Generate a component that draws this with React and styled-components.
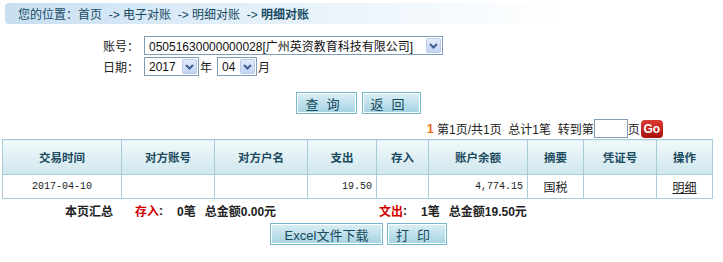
import styled, { createGlobalStyle } from "styled-components";

const GlobalStyle = createGlobalStyle`
  html, body {
    margin: 0;
    padding: 0;
    background: #fff;
    font-family: "Liberation Sans", "Noto Sans CJK SC", sans-serif;
    font-size: 12px;
    color: #333;
  }
`;

const Page = styled.div`
  width: 723px;
  height: 262px;
  overflow: hidden;
  padding-top: 3px;
  box-sizing: border-box;
`;

const Crumbs = styled.div`
  margin-left: 5px;
  width: 560px;
  height: 21px;
  border-radius: 4px 0 0 4px;
  background: linear-gradient(to right, #c8dff2 0%, #e4f0f9 45%, #ffffff 100%);
  display: flex;
  align-items: center;
  padding-left: 13px;
  box-sizing: border-box;
  color: #164a63;
  font-size: 12px;
  white-space: pre;
  b {
    font-weight: bold;
  }
`;

const Form = styled.div`
  margin-top: 12px;
  padding-left: 103px;
  display: grid;
  grid-template-columns: 41px auto;
  row-gap: 2px;
  align-items: center;
`;

const Label = styled.span`
  font-size: 12px;
  color: #222;
`;

const Fields = styled.div`
  display: flex;
  align-items: center;
  font-size: 12px;
  color: #222;
`;

const SelectBox = styled.div`
  width: ${(p) => p.$w}px;
  height: 19px;
  border: 1px solid #7f9db9;
  box-sizing: border-box;
  display: flex;
  align-items: center;
  justify-content: space-between;
  padding: 0 1px 0 4px;
  font-size: 12px;
  color: #111;
  background: #fff;
`;

const Unit = styled.span`
  margin: 0 ${(p) => p.$mr || 0}px 0 1px;
`;

const Arrow = styled.span`
  width: 15px;
  height: 15px;
  box-sizing: border-box;
  border: 1px solid #b9cbe8;
  border-radius: 2px;
  background: linear-gradient(#e3ecfa, #c3d4f2);
  display: flex;
  align-items: center;
  justify-content: center;
`;

const ButtonRow = styled.div`
  display: flex;
  gap: ${(p) => p.$gap}px;
  padding-left: ${(p) => p.$pl}px;
  margin-top: ${(p) => p.$mt}px;
`;

const Btn = styled.button`
  width: ${(p) => p.$w}px;
  height: 22px;
  padding: 0;
  border: 1px solid #76b6cd;
  box-shadow: inset 0 0 0 1px #fff;
  background: linear-gradient(#dbeff5, #a5d2e2);
  color: #164a5c;
  font-family: "Liberation Sans", "Noto Sans CJK SC", sans-serif;
  font-size: 13px;
  letter-spacing: ${(p) => p.$ls || 0}px;
  display: flex;
  align-items: center;
  justify-content: center;
`;

const Pager = styled.div`
  margin-top: 4px;
  padding-left: 427px;
  height: 21px;
  display: flex;
  align-items: center;
  font-size: 12px;
  color: #222;
  white-space: pre;
  .cur {
    color: #f26a10;
    font-weight: bold;
  }
`;

const PageInput = styled.span`
  width: 34px;
  height: 19px;
  border: 1px solid #7f9db9;
  box-sizing: border-box;
  display: inline-block;
`;

const GoBtn = styled.span`
  width: 22px;
  height: 18px;
  margin-left: 1px;
  border-radius: 4px;
  background: linear-gradient(#dc3b33, #a8110c);
  color: #fff;
  font-weight: bold;
  font-size: 12px;
  display: flex;
  align-items: center;
  justify-content: center;
`;

const Table = styled.table`
  margin-left: 2px;
  width: 710px;
  border-collapse: collapse;
  table-layout: fixed;
  th, td {
    border: 1px solid #a9cbd8;
    padding: 0;
  }
  th {
    height: 34px;
    background: linear-gradient(#f1f9fb, #cfe6ee);
    color: #1b4a5e;
    font-size: 11.5px;
    font-weight: bold;
    text-align: center;
  }
  td {
    height: 23px;
    font-size: 12px;
    color: #222;
    text-align: center;
  }
`;

const Num = styled.td`
  && {
    font-family: "Liberation Mono", monospace;
    font-size: 10px;
    text-align: ${(p) => (p.$right ? "right" : "center")};
    padding-right: ${(p) => (p.$right ? 4 : 0)}px;
  }
`;

const Link = styled.a`
  color: #222;
  text-decoration: underline;
`;

const Summary = styled.div`
  display: flex;
  align-items: center;
  height: 21px;
  margin-top: 1px;
  font-weight: bold;
  font-size: 12px;
  color: #222;
  white-space: pre;
`;

const Item = styled.span`
  margin-left: ${(p) => p.$ml}px;
  color: ${(p) => (p.$red ? "#d40000" : "inherit")};
`;

function Chevron() {
  return (
    <svg width="9" height="6" viewBox="0 0 9 6">
      <path d="M1 1 L4.5 4.5 L8 1" stroke="#3d5f93" strokeWidth="2" fill="none" />
    </svg>
  );
}

function Select({ w, children }) {
  return (
    <SelectBox $w={w}>
      <span>{children}</span>
      <Arrow>
        <Chevron />
      </Arrow>
    </SelectBox>
  );
}

const cols = [119, 93, 93, 69, 52, 99, 56, 73, 56];

export default function App() {
  return (
    <Page>
      <GlobalStyle />
      <Crumbs>
        您的位置：首页  -&gt; 电子对账  -&gt; 明细对账  -&gt; <b>明细对账</b>
      </Crumbs>

      <Form>
        <Label>账号：</Label>
        <Fields>
          <Select w={299}>05051630000000028[广州英资教育科技有限公司]</Select>
        </Fields>
        <Label>日期：</Label>
        <Fields>
          <Select w={55}>2017</Select>
          <Unit $mr={5}>年</Unit>
          <Select w={40}>04</Select>
          <Unit>月</Unit>
        </Fields>
      </Form>

      <ButtonRow $pl={296} $gap={5} $mt={16}>
        <Btn $w={61} $ls={8}>查询</Btn>
        <Btn $w={59} $ls={8}>返回</Btn>
      </ButtonRow>

      <Pager>
        <span className="cur">1</span> 第1页/共1页  总计1笔  转到第<PageInput />页<GoBtn>Go</GoBtn>
      </Pager>

      <Table>
        <colgroup>
          {cols.map((w, i) => (
            <col key={i} style={{ width: w }} />
          ))}
        </colgroup>
        <thead>
          <tr>
            <th>交易时间</th>
            <th>对方账号</th>
            <th>对方户名</th>
            <th>支出</th>
            <th>存入</th>
            <th>账户余额</th>
            <th>摘要</th>
            <th>凭证号</th>
            <th>操作</th>
          </tr>
        </thead>
        <tbody>
          <tr>
            <Num>2017-04-10</Num>
            <td></td>
            <td></td>
            <Num $right>19.50</Num>
            <td></td>
            <Num $right>4,774.15</Num>
            <td>国税</td>
            <td></td>
            <td>
              <Link>明细</Link>
            </td>
          </tr>
        </tbody>
      </Table>

      <Summary>
        <Item $ml={65}>本页汇总</Item>
        <Item $ml={22} $red>存入</Item>
        <Item $ml={0}>:</Item>
        <Item $ml={14}>0笔</Item>
        <Item $ml={9}>总金额0.00元</Item>
        <Item $ml={103} $red>文出</Item>
        <Item $ml={0}>:</Item>
        <Item $ml={14}>1笔</Item>
        <Item $ml={9}>总金额19.50元</Item>
      </Summary>

      <ButtonRow $pl={270} $gap={4} $mt={2}>
        <Btn $w={113}>Excel文件下载</Btn>
        <Btn $w={60} $ls={8}>打印</Btn>
      </ButtonRow>
    </Page>
  );
}
